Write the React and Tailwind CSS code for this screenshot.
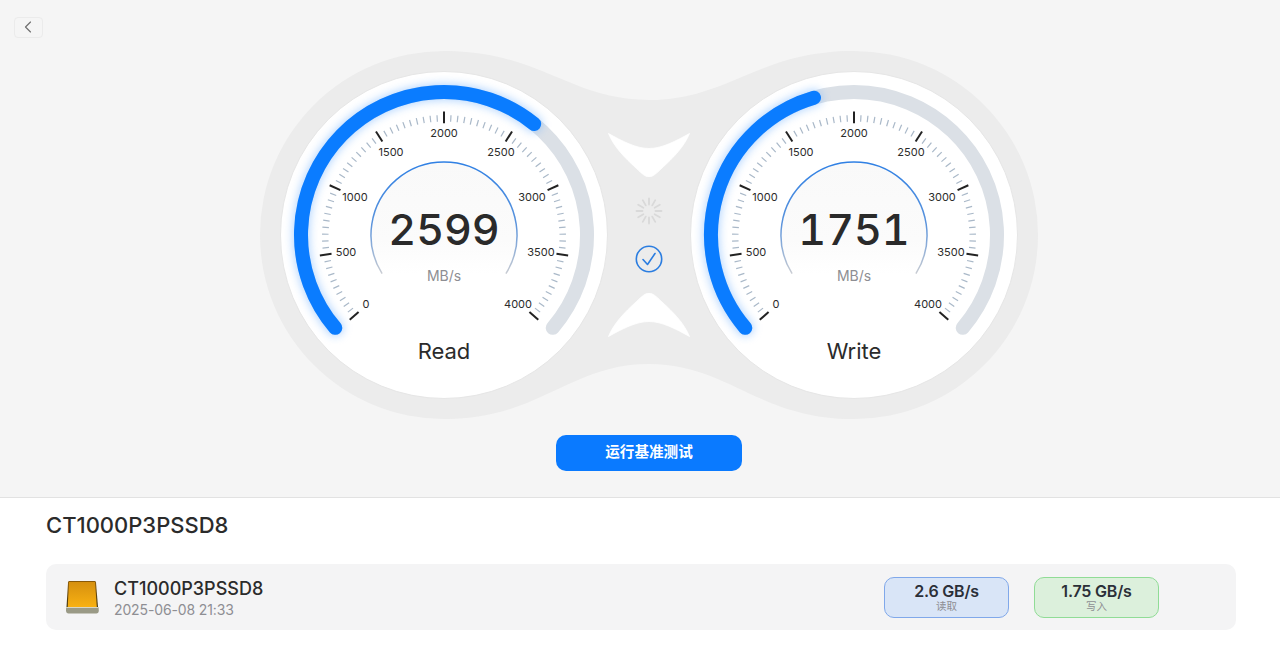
import { ChevronLeft } from "lucide-react";

const FONT = "font-['Inter','Noto_Sans_CJK_SC',sans-serif]";

const C = 164;
const polar = (r, deg, cy = C) => {
  const a = (deg * Math.PI) / 180;
  return [C + r * Math.sin(a), cy - r * Math.cos(a)];
};
const arcPath = (r, from, to) => {
  const [x1, y1] = polar(r, from);
  const [x2, y2] = polar(r, to);
  const large = to - from > 180 ? 1 : 0;
  return `M ${x1} ${y1} A ${r} ${r} 0 ${large} 1 ${x2} ${y2}`;
};

const labels = [
  { text: "0", x: 86, y: 237 },
  { text: "500", x: 66, y: 185 },
  { text: "1000", x: 75, y: 130 },
  { text: "1500", x: 111, y: 85 },
  { text: "2000", x: 164, y: 66 },
  { text: "2500", x: 221, y: 85 },
  { text: "3000", x: 252, y: 130 },
  { text: "3500", x: 261, y: 185 },
  { text: "4000", x: 238, y: 237 },
];

function Gauge({ id, value, title }) {
  const ARC_START = -130.5;
  const ARC_SWEEP = 261;
  const end = ARC_START + (value / 4000) * ARC_SWEEP;
  const ticks = [];
  for (let i = 0; i <= 80; i++) {
    const deg = -131.3 + i * 3.2825;
    const major = i % 10 === 0;
    // the dial is centred 2px lower than the arc
    const [x1, y1] = polar(major ? 125.5 : 122, deg, 166);
    const [x2, y2] = polar(major ? 113.7 : 115.5, deg, 166);
    ticks.push(
      <line
        key={i}
        x1={x1}
        y1={y1}
        x2={x2}
        y2={y2}
        stroke={major ? "#222222" : "#a9b8c8"}
        strokeWidth={major ? 2 : 1.2}
      />
    );
  }
  return (
    <div className="relative w-[328px] h-[328px] shrink-0 rounded-full bg-white border border-[#e6e6e6]">
      <svg className="absolute left-[-1px] top-[-1px]" width="328" height="328" viewBox="0 0 328 328">
        <defs>
          <filter id={`${id}-glow`} x="-20%" y="-20%" width="140%" height="140%">
            <feGaussianBlur stdDeviation="4" />
          </filter>
          <linearGradient id={`${id}-ring`} x1="0" y1="0" x2="0" y2="1">
            <stop offset="0" stopColor="#2f80e4" />
            <stop offset="0.55" stopColor="#5a93dc" />
            <stop offset="1" stopColor="#c9ccd2" />
          </linearGradient>
          <linearGradient id={`${id}-fill`} x1="0" y1="0" x2="0" y2="1">
            <stop offset="0" stopColor="#f9f9f9" />
            <stop offset="0.7" stopColor="#fbfbfb" />
            <stop offset="1" stopColor="#ffffff" />
          </linearGradient>
        </defs>
        <path d={arcPath(143, -130.5, 130.5)} fill="none" stroke="#dbe0e6" strokeWidth="14" strokeLinecap="round" />
        <path d={arcPath(143, ARC_START, end)} fill="none" stroke="#7db8ff" strokeWidth="17" strokeLinecap="round" opacity="0.55" filter={`url(#${id}-glow)`} />
        <path d={arcPath(143, ARC_START, end)} fill="none" stroke="#0a7cff" strokeWidth="14" strokeLinecap="round" />
        {ticks}
        <path d={arcPath(73, -122, 122)} fill={`url(#${id}-fill)`} stroke={`url(#${id}-ring)`} strokeWidth="1.5" />
        {labels.map((l) => (
          <text key={l.text} x={l.x} y={l.y} textAnchor="middle" fontSize="11" fill="#2b2b2b" fontFamily="Inter, sans-serif">
            {l.text}
          </text>
        ))}
      </svg>
      <div className="absolute left-0 right-0 top-[127px] text-center text-[43px] leading-[60px] font-medium tabular-nums text-[#2a2a2a]">
        {value}
      </div>
      <div className="absolute left-0 right-0 top-[194px] text-center text-sm leading-5 text-[#8e8e93]">MB/s</div>
      <div className="absolute left-0 right-0 top-[265px] text-center text-[22px] leading-7 text-[#2b2b2b]">{title}</div>
    </div>
  );
}

function Cutout({ flip }) {
  return (
    <svg width="82" height="44" viewBox="0 0 82 44" className={flip ? "rotate-180" : ""}>
      <path
        d="M0.5 0.5 C14 8 28 15.5 41 15.5 C54 15.5 68 8 81.5 0.5 C76 14 65 25 54 35 C48 41 44 44 41 44 C38 44 34 41 28 35 C17 25 6 14 0.5 0.5 Z"
        fill="#ffffff"
        stroke="#ffffff"
        strokeWidth="0.8"
        strokeLinejoin="round"
      />
    </svg>
  );
}

function Spinner() {
  return (
    <svg width="28" height="28" viewBox="0 0 28 28">
      {Array.from({ length: 12 }).map((_, i) => (
        <line
          key={i}
          x1="14"
          y1="1.5"
          x2="14"
          y2="7.5"
          stroke="#d9d9d9"
          strokeWidth="1.8"
          strokeLinecap="round"
          transform={`rotate(${i * 30} 14 14)`}
        />
      ))}
    </svg>
  );
}

function DriveIcon() {
  return (
    <svg width="33" height="34" viewBox="1 0 33 34">
      <defs>
        <linearGradient id="drive-body" x1="0" y1="0" x2="0" y2="1">
          <stop offset="0" stopColor="#d6900f" />
          <stop offset="1" stopColor="#f8b112" />
        </linearGradient>
        <linearGradient id="drive-edge" x1="0" y1="0" x2="0" y2="1">
          <stop offset="0" stopColor="#8a5a08" />
          <stop offset="1" stopColor="#3f3413" />
        </linearGradient>
      </defs>
      <path d="M3 2.5 C3.1 1.3 3.8 1 5 1 H29 C30.2 1 30.9 1.3 31 2.5 L33 27 H1.5 Z" fill="url(#drive-edge)" />
      <path d="M4 2 H30 L31.8 27 H2.7 Z" fill="url(#drive-body)" />
      <path d="M1.2 27 H33.6 L33.8 30.5 C33.8 32.5 32.8 33.5 31.3 33.5 H3.5 C2 33.5 1 32.5 1 30.5 Z" fill="#9a9a86" />
      <path d="M1.2 27 H33.6 L33.7 28 H1.1 Z" fill="#d8d6c4" />
    </svg>
  );
}

function SpeedPill({ value, label, className }) {
  return (
    <div className={`w-[125px] h-[41px] rounded-[10px] border flex flex-col items-center justify-center ${className}`}>
      <div className="text-[16px] leading-[19px] font-semibold tracking-[-0.2px] text-[#2b2f38]">{value}</div>
      <div className="text-[10.5px] leading-[12px] text-[#8e8e93]">{label}</div>
    </div>
  );
}

export default function App() {
  return (
    <div className={`w-[1280px] h-[653px] overflow-hidden bg-white ${FONT}`}>
      <div className="relative h-[498px] bg-[#f5f5f5] border-b border-[#e2e2e2]">
        <button className="absolute left-[14px] top-[17px] w-[29px] h-[21px] pb-px pr-px flex items-center justify-center rounded-[4px] border border-[#ebebeb] text-[#6f6f6f]">
          <ChevronLeft size={20} strokeWidth={1.4} />
        </button>
        <div className="flex flex-col items-center pt-[51px] pl-[18px]">
          <div className="relative w-[778px] h-[368px]">
            <svg className="absolute inset-0" width="778" height="368" viewBox="0 0 778 368">
              <circle cx="184" cy="184" r="184" fill="#ececec" />
              <circle cx="594" cy="184" r="184" fill="#ececec" />
              <path
                d="M184 0 C280 0 310 49 389 49 C468 49 498 0 594 0 V368 C498 368 468 313 389 313 C310 313 280 368 184 368 Z"
                fill="#ececec"
              />
            </svg>
            <div className="relative flex items-center px-5 pt-5">
              <Gauge id="read" value={2599} title="Read" />
              <div className="w-[82px] h-[328px] shrink-0 flex flex-col items-center pt-[62px]">
                <Cutout />
                <div className="mt-5">
                  <Spinner />
                </div>
                <svg className="mt-5" width="28" height="28" viewBox="0 0 28 28" fill="none" stroke="#2b7de0">
                  <circle cx="14" cy="14" r="12.7" strokeWidth="1.6" />
                  <path d="M8 14.5 L12.5 19.5 L20 8.5" strokeWidth="1.6" strokeLinecap="round" strokeLinejoin="round" />
                </svg>
                <div className="mt-5">
                  <Cutout flip />
                </div>
              </div>
              <Gauge id="write" value={1751} title="Write" />
            </div>
          </div>
          <button className="mt-4 w-[186px] h-9 rounded-[10px] bg-[#0a7aff] text-[14.6px] font-bold text-white">
            运行基准测试
          </button>
        </div>
      </div>
      <div className="pl-[46px] pr-[44px]">
        <h1 className="pt-[13px] text-[22px] leading-7 font-medium text-[#2b2b2b]">CT1000P3PSSD8</h1>
        <div className="mt-[25px] h-[66px] rounded-[10px] bg-[#f4f4f5] flex items-center pl-5">
          <DriveIcon />
          <div className="ml-[15px] pt-[3px]">
            <div className="text-lg leading-[22px] font-medium text-[#2b2b2b]">CT1000P3PSSD8</div>
            <div className="text-sm leading-[20px] tracking-[-0.13px] text-[#8e8e93]">2025-06-08 21:33</div>
          </div>
          <div className="ml-auto mr-[77px] flex gap-[25px]">
            <SpeedPill value="2.6 GB/s" label="读取" className="bg-[#d9e5f7] border-[#80a8ea]" />
            <SpeedPill value="1.75 GB/s" label="写入" className="bg-[#dcf0dc] border-[#90dc96]" />
          </div>
        </div>
      </div>
    </div>
  );
}
